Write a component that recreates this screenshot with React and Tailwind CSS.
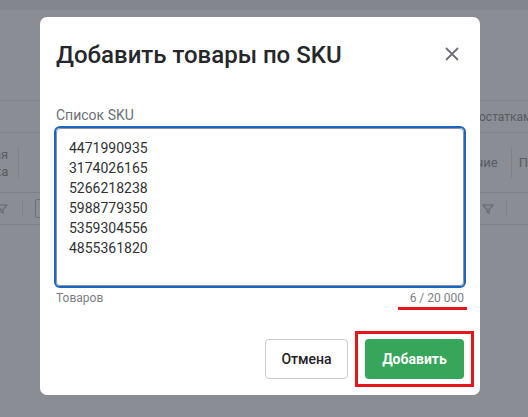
import React from "react";

function FilterIcon({ className }) {
  return (
    <svg viewBox="0 0 12 10" className={className} fill="none" stroke="currentColor" strokeWidth="1.2">
      <path d="M1 1h10L7 5.5V9L5 8V5.5z" />
    </svg>
  );
}

export default function App() {
  return (
    <div className="relative h-[417px] w-[528px] overflow-hidden bg-[#8a8d94] font-['Roboto',sans-serif] text-[12px] text-[#585b62]">
      {/* dimmed page behind */}
      <div className="h-[10px] bg-[#83868d]" />
      <div className="h-[90px]" />
      <div className="h-[32px] border-t border-[#7e8188] flex items-center">
        <span className="ml-[479px] whitespace-nowrap">остатками</span>
      </div>
      <div className="h-[60px] border-t border-[#7e8188] flex items-center">
        <div className="w-[22px] flex flex-col items-end leading-[17px] -ml-[10px] text-[13px]">
          <span>ая</span>
          <span>ка</span>
        </div>
        <div className="ml-[10px] h-[30px] border-l border-[#7e8188]" />
        <span className="ml-[457px] text-[13px]">чие</span>
        <div className="ml-[13px] h-[30px] border-l border-[#7e8188]" />
        <span className="ml-[7px] text-[13px]">П</span>
      </div>
      <div className="h-[32px] border-t border-[#7e8188] flex items-center">
        <FilterIcon className="-ml-[4px] w-[12px] h-[10px] text-[#666970]" />
        <div className="ml-[14px] h-[16px] border-l border-[#7e8188]" />
        <div className="ml-[12px] h-[19px] w-[40px] border border-[#6e7178] rounded-[2px]" />
        <FilterIcon className="ml-[407px] w-[12px] h-[10px] text-[#666970]" />
        <div className="ml-[12px] h-[16px] border-l border-[#7e8188]" />
      </div>
      <div className="border-t border-[#7e8188]" />

      {/* modal */}
      <div className="absolute left-[40px] top-[17px] w-[440px] h-[378px] rounded-[7px] bg-white px-4 pt-[22px]">
        <div className="flex items-center justify-between">
          <h2 className="text-[24px] leading-[32px] font-medium text-[#25272b]">
            Добавить товары по SKU
          </h2>
          <button className="mr-[5px] mt-[-3px] text-[#6b7079]">
            <svg viewBox="0 0 14 14" className="w-[14px] h-[14px]" stroke="currentColor" strokeWidth="1.8">
              <path d="M1 1l12 12M13 1L1 13" />
            </svg>
          </button>
        </div>

        <div className="mt-[34px] text-[14px] leading-[20px] text-[#6b6f76]">Список SKU</div>
        <textarea
          className="mt-[3px] block w-full h-[158px] resize-none rounded-[4px] border border-[#8e9197] outline-2 outline-solid outline-[#1766c2] pl-[12px] pt-[9px] text-[14px] leading-[20px] text-[#2f3135]"
          defaultValue={"4471990935\n3174026165\n5266218238\n5988779350\n5359304556\n4855361820"}
        />
        <div className="mt-[4px] flex justify-between text-[12px] leading-[16px] text-[#7a7e85]">
          <span>Товаров</span>
          <span>6 / 20 000</span>
        </div>
        <div className="flex justify-end">
          <div className="w-[69px] h-[3px] bg-[#e2161c] -mr-[3px] mt-[1px]" />
        </div>

        <div className="mt-[29px] flex justify-end gap-[17px]">
          <button className="w-[83px] h-[40px] rounded-[4px] border border-[#c9ccd1] text-[14px] font-medium text-[#1f2125]">
            Отмена
          </button>
          <div className="relative">
            <div className="absolute -left-[10px] -right-[10px] -top-[8px] -bottom-[8px] border-[3px] border-[#e2161c]" />
            <button className="relative w-[99px] h-[40px] rounded-[4px] bg-[#35a65a] text-[14px] font-bold text-white">
              Добавить
            </button>
          </div>
        </div>
      </div>
    </div>
  );
}
